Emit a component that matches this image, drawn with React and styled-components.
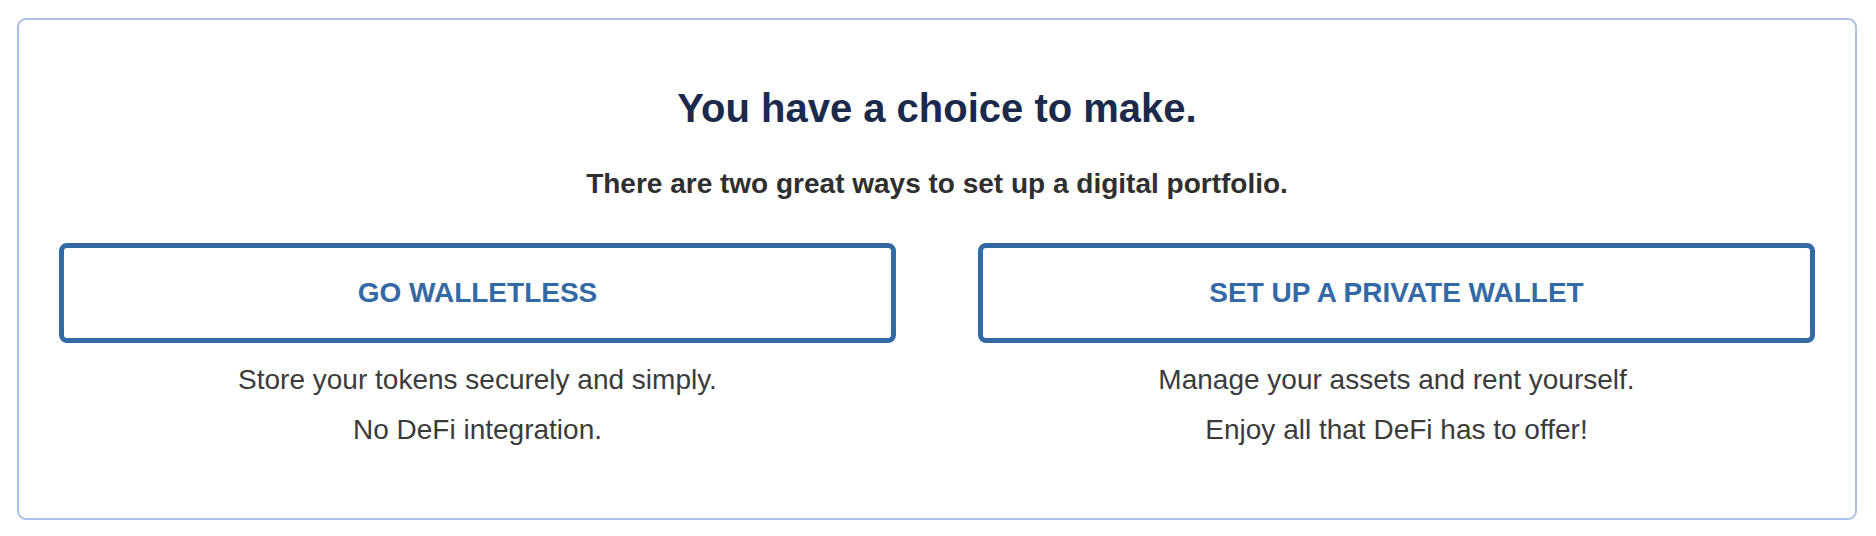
import React from "react"
import styled, { createGlobalStyle } from "styled-components"

const GlobalStyle = createGlobalStyle`
    html, body {
        margin: 0;
        padding: 0;
        background: #ffffff;
        font-family: "Liberation Sans", Arial, sans-serif;
    }
`

const options = [
    {
        label: "GO WALLETLESS",
        lines: ["Store your tokens securely and simply.", "No DeFi integration."],
    },
    {
        label: "SET UP A PRIVATE WALLET",
        lines: ["Manage your assets and rent yourself.", "Enjoy all that DeFi has to offer!"],
    },
]

const App = () => {
    return (
        <>
            <GlobalStyle />
            <Page>
                <Card>
                    <Title>You have a choice to make.</Title>
                    <Subtitle>There are two great ways to set up a digital portfolio.</Subtitle>
                    <Options>
                        {options.map((option) => (
                            <Option key={option.label}>
                                <ChoiceButton>{option.label}</ChoiceButton>
                                <Description>
                                    {option.lines.map((line) => (
                                        <Line key={line}>{line}</Line>
                                    ))}
                                </Description>
                            </Option>
                        ))}
                    </Options>
                </Card>
            </Page>
        </>
    )
}

const Page = styled.div`
    padding: 18px 19px 16px 17px;
`

const Card = styled.div`
    display: flex;
    flex-direction: column;
    align-items: center;
    border: 2px solid #abbfe8;
    border-radius: 9px;
    padding: 64px 40px 63px;
`

const Title = styled.h1`
    margin: 0;
    font-size: 40px;
    line-height: 48px;
    font-weight: 700;
    color: #1b2a4b;
`

const Subtitle = styled.p`
    margin: 36px 0 0;
    font-size: 28px;
    line-height: 32px;
    font-weight: 700;
    color: #2f2f2f;
`

const Options = styled.div`
    display: grid;
    grid-template-columns: 1fr 1fr;
    column-gap: 82px;
    width: 100%;
    margin-top: 43px;
`

const Option = styled.div`
    display: flex;
    flex-direction: column;
    align-items: stretch;
`

const ChoiceButton = styled.button`
    all: unset;
    box-sizing: border-box;
    display: flex;
    align-items: center;
    justify-content: center;
    height: 100px;
    border: 5px solid #336aa6;
    border-radius: 8px;
    background: #ffffff;
    color: #336aa6;
    font-family: "Liberation Sans", Arial, sans-serif;
    font-size: 28px;
    font-weight: 700;
    cursor: pointer;
`

const Description = styled.div`
    margin-top: 12px;
    text-align: center;
`

const Line = styled.p`
    margin: 0;
    font-size: 28px;
    line-height: 50px;
    color: #3b3b3b;
`

export default App
